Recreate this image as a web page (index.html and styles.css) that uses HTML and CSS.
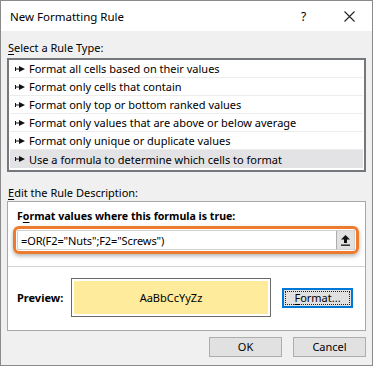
FILE: index.html
```html
<!DOCTYPE html>
<html lang="en">
<head>
    <meta charset="UTF-8">
    <title>New Formatting Rule</title>
    <link rel="stylesheet" href="styles.css">
</head>
<body>
    <div class="dialog">
        <div class="titlebar">
            <span class="title">New Formatting Rule</span>
            <span class="help">?</span>
            <span class="close">
                <svg width="11" height="11" viewBox="0 0 11 11"><path d="M0.5 0.5L10.5 10.5M10.5 0.5L0.5 10.5" stroke="#222" stroke-width="1.1" fill="none"/></svg>
            </span>
        </div>

        <div class="content">
            <div class="label label-top"><u>S</u>elect a Rule Type:</div>
            <div class="rule-list">
                <div class="rule"><svg class="pin" width="10" height="6" viewBox="0 0 10 6"><path d="M0 1H1V5H0Z M1 2.5H5V3.5H1Z M4 0L10 3L4 6Z" fill="#111"/></svg>Format all cells based on their values</div>
                <div class="rule"><svg class="pin" width="10" height="6" viewBox="0 0 10 6"><path d="M0 1H1V5H0Z M1 2.5H5V3.5H1Z M4 0L10 3L4 6Z" fill="#111"/></svg>Format only cells that contain</div>
                <div class="rule"><svg class="pin" width="10" height="6" viewBox="0 0 10 6"><path d="M0 1H1V5H0Z M1 2.5H5V3.5H1Z M4 0L10 3L4 6Z" fill="#111"/></svg>Format only top or bottom ranked values</div>
                <div class="rule"><svg class="pin" width="10" height="6" viewBox="0 0 10 6"><path d="M0 1H1V5H0Z M1 2.5H5V3.5H1Z M4 0L10 3L4 6Z" fill="#111"/></svg>Format only values that are above or below average</div>
                <div class="rule"><svg class="pin" width="10" height="6" viewBox="0 0 10 6"><path d="M0 1H1V5H0Z M1 2.5H5V3.5H1Z M4 0L10 3L4 6Z" fill="#111"/></svg>Format only unique or duplicate values</div>
                <div class="rule selected"><svg class="pin" width="10" height="6" viewBox="0 0 10 6"><path d="M0 1H1V5H0Z M1 2.5H5V3.5H1Z M4 0L10 3L4 6Z" fill="#111"/></svg>Use a formula to determine which cells to format</div>
            </div>

            <div class="label label-edit"><u>E</u>dit the Rule Description:</div>
            <div class="panel">
                <div class="panel-title">F<u>o</u>rmat values where this formula is true:</div>
                <div class="formula-ring">
                    <div class="formula-input">
                        <span class="formula-text">=OR(F2="Nuts";F2="Screws")</span>
                        <span class="collapse-btn">
                            <svg width="11" height="12" viewBox="0 0 11 12"><path d="M5.5 1L10 5.5H7V9H4V5.5H1Z" fill="#111"/><rect x="1" y="10.5" width="9" height="1.3" fill="#111"/></svg>
                        </span>
                    </div>
                </div>
                <div class="preview-row">
                    <span class="preview-label">Preview:</span>
                    <div class="preview-box">
                        <div class="preview-fill">AaBbCcYyZz</div>
                    </div>
                    <div class="format-btn"><span class="focus"><u>F</u>ormat...</span></div>
                </div>
            </div>

            <div class="actions">
                <div class="btn">OK</div>
                <div class="btn">Cancel</div>
            </div>
        </div>
    </div>
</body>
</html>
```

FILE: styles.css
```css
* {
    margin: 0;
    padding: 0;
    box-sizing: border-box;
}

body {
    font-family: 'Noto Sans', 'Open Sans', sans-serif;
    font-size: 11px;
    color: #000;
    background: #fff;
}

u {
    text-decoration: underline;
    text-underline-offset: 2px;
}

.dialog {
    width: 373px;
    height: 366px;
    border: 1px solid #8a8a8a;
    background-color: #f0f0f0;
    display: flex;
    flex-direction: column;
}

.titlebar {
    height: 30px;
    background-color: #fff;
    display: flex;
    align-items: center;
    padding-left: 9px;
}

.title {
    flex: 1;
    font-size: 11.5px;
}

.help {
    width: 20px;
    font-size: 12px;
    margin-right: 21px;
}

.close {
    width: 30px;
    display: flex;
    align-items: center;
    padding-left: 2px;
}

.content {
    padding: 0 6px 0 6px;
    display: flex;
    flex-direction: column;
}

.label {
    height: 16px;
    line-height: 16px;
    padding-left: 1px;
}

.label-top {
    margin-top: 9px;
}

.rule-list {
    margin-top: 2px;
    height: 114px;
    border: 2px solid #74787c;
    background-color: #fff;
    padding: 0 1px;
}

.rule {
    height: 18px;
    line-height: 17px;
    border-bottom: 1px solid #ececec;
    display: flex;
    align-items: center;
    padding-left: 5px;
}

.rule.selected {
    background-color: #e3e3e6;
    border-bottom: none;
}

.pin {
    margin-right: 4px;
}

.label-edit {
    margin-top: 13px;
}

.panel {
    height: 130px;
    border: 1px solid #a8a8a8;
    background-color: #fff;
    display: flex;
    flex-direction: column;
}

.panel-title {
    font-weight: 700;
    font-size: 10.6px;
    height: 16px;
    line-height: 16px;
    margin-top: 6px;
    padding-left: 9px;
}

.formula-ring {
    margin: 2px 6px 0 5px;
    height: 28px;
    border: 3px solid #ee7a2e;
    border-radius: 6px;
    padding: 1px;
    box-shadow: 0 2px 4px rgba(0, 0, 0, 0.3);
}

.formula-input {
    height: 20px;
    border: 1px solid #d0d0d0;
    display: flex;
    align-items: center;
    padding-left: 3px;
}

.formula-text {
    flex: 1;
    font-size: 11px;
    letter-spacing: -0.1px;
}

.collapse-btn {
    width: 18px;
    height: 18px;
    background-color: #e1e1e1;
    border-left: 1px solid #adadad;
    display: flex;
    align-items: center;
    justify-content: center;
}

.preview-row {
    margin-top: 12px;
    border-top: 1px solid #d4d4d4;
    flex: 1;
    display: flex;
    align-items: center;
    padding-left: 9px;
    padding-bottom: 2px;
}

.preview-label {
    font-weight: 700;
    width: 54px;
}

.preview-box {
    width: 200px;
    height: 39px;
    border: 1px solid #6a6a6a;
    padding: 2px;
    background-color: #fff;
}

.preview-fill {
    height: 100%;
    background-color: #ffeb9c;
    display: flex;
    align-items: center;
    justify-content: center;
}

.format-btn {
    margin-left: 11px;
    width: 71px;
    height: 20px;
    border: 2px solid #0078d7;
    background-color: #e1e1e1;
    padding: 1px;
}

.format-btn .focus {
    display: flex;
    height: 100%;
    align-items: center;
    justify-content: center;
    border: 1px dotted #222;
}

.actions {
    margin-top: 6px;
    display: flex;
    justify-content: flex-end;
    gap: 11px;
}

.btn {
    width: 73px;
    height: 20px;
    line-height: 18px;
    text-align: center;
    background-color: #e1e1e1;
    border: 1px solid #adadad;
}
```
